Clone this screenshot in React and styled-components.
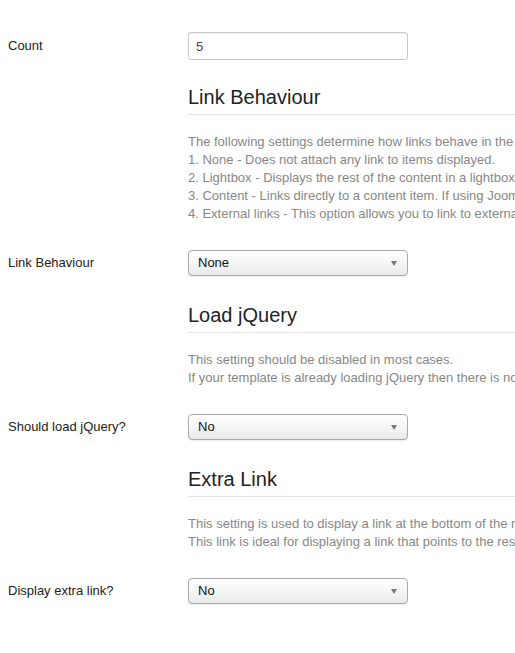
import React from "react";
import styled, { createGlobalStyle } from "styled-components";

const Global = createGlobalStyle`
  html, body {
    margin: 0;
    padding: 0;
    background: #ffffff;
  }
  body {
    font-family: "Liberation Sans", Arial, Helvetica, sans-serif;
    font-size: 13px;
    line-height: 18px;
    color: #333333;
  }
`;

const Page = styled.div`
  width: 100vw;
  height: 100vh;
  overflow: hidden;
  box-sizing: border-box;
  padding: 32px 0 0 8px;
`;

const Form = styled.div`
  width: 760px;
  display: flex;
  flex-direction: column;
`;

const ControlGroup = styled.div`
  display: flex;
  align-items: center;
  margin-bottom: ${(p) => p.$mb ?? 27}px;
`;

const Label = styled.label`
  width: 180px;
  flex: none;
  font-size: 13px;
  color: #222222;
`;

const Controls = styled.div`
  flex: 1;
  min-width: 0;
`;

const SpacerBlock = styled.div`
  margin-left: 180px;
  margin-bottom: 27px;
`;

const Heading = styled.h3`
  margin: 0;
  font-size: 20px;
  font-weight: normal;
  line-height: 24px;
  color: #222222;
  padding-bottom: 5px;
  border-bottom: 1px solid #e2e2e2;
`;

const Description = styled.div`
  margin-top: 18px;
  color: #878787;
  font-size: 13px;
  line-height: 18px;
  white-space: nowrap;
`;

const TextInput = styled.input`
  box-sizing: border-box;
  width: 220px;
  height: 28px;
  padding: 4px 7px;
  font-family: "Liberation Sans", Arial, Helvetica, sans-serif;
  font-size: 13px;
  color: #444444;
  border: 1px solid #c8c8c8;
  border-radius: 3px;
  box-shadow: inset 0 1px 1px rgba(0, 0, 0, 0.06);
  outline: none;
  display: block;
`;

const SelectBox = styled.div`
  box-sizing: border-box;
  width: 220px;
  height: 26px;
  padding: 0 10px 0 9px;
  display: flex;
  align-items: center;
  justify-content: space-between;
  border: 1px solid #a9a9a9;
  border-radius: 4px;
  background: linear-gradient(#ffffff 0%, #f7f7f7 45%, #e9e9e9 100%);
  box-shadow: 0 1px 1px rgba(0, 0, 0, 0.08);
  font-size: 13px;
  color: #111111;
`;

const Arrow = styled.span`
  width: 0;
  height: 0;
  border-left: 3.5px solid transparent;
  border-right: 3.5px solid transparent;
  border-top: 5px solid #777777;
  margin-top: 1px;
`;

const Select = ({ value }) => (
  <SelectBox>
    <span>{value}</span>
    <Arrow />
  </SelectBox>
);

const Spacer = ({ title, lines }) => (
  <SpacerBlock>
    <Heading>{title}</Heading>
    <Description>
      {lines.map((l, i) => (
        <div key={i}>{l}</div>
      ))}
    </Description>
  </SpacerBlock>
);

export default function App() {
  return (
    <Page>
      <Global />
      <Form>
        <ControlGroup $mb={25}>
          <Label>Count</Label>
          <Controls>
            <TextInput defaultValue="5" />
          </Controls>
        </ControlGroup>

        <Spacer
          title="Link Behaviour"
          lines={[
            "The following settings determine how links behave in the module.",
            "1. None - Does not attach any link to items displayed.",
            "2. Lightbox - Displays the rest of the content in a lightbox.",
            "3. Content - Links directly to a content item. If using Joomla SEF URLs.",
            "4. External links - This option allows you to link to external websites.",
          ]}
        />

        <ControlGroup>
          <Label>Link Behaviour</Label>
          <Controls>
            <Select value="None" />
          </Controls>
        </ControlGroup>

        <Spacer
          title="Load jQuery"
          lines={[
            "This setting should be disabled in most cases.",
            "If your template is already loading jQuery then there is no need to load it again.",
          ]}
        />

        <ControlGroup>
          <Label>Should load jQuery?</Label>
          <Controls>
            <Select value="No" />
          </Controls>
        </ControlGroup>

        <Spacer
          title="Extra Link"
          lines={[
            "This setting is used to display a link at the bottom of the module.",
            "This link is ideal for displaying a link that points to the rest of the items.",
          ]}
        />

        <ControlGroup>
          <Label>Display extra link?</Label>
          <Controls>
            <Select value="No" />
          </Controls>
        </ControlGroup>
      </Form>
    </Page>
  );
}
